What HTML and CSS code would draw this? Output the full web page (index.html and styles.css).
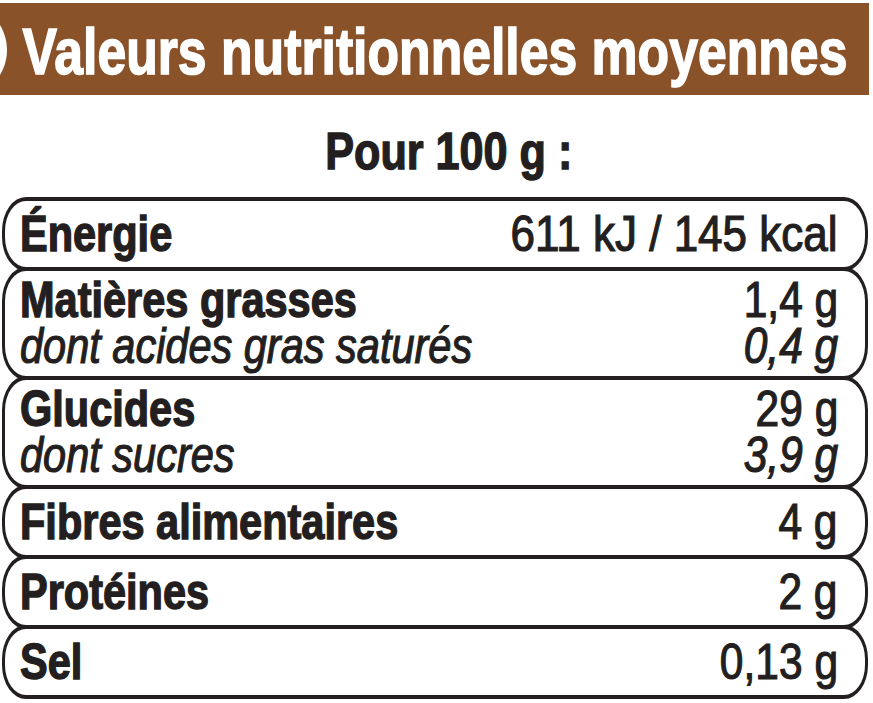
FILE: index.html
```html
<!DOCTYPE html>
<html lang="fr">
<head>
<meta charset="utf-8">
<title>Valeurs nutritionnelles moyennes</title>
<link rel="stylesheet" href="styles.css">
</head>
<body>
<header class="banner">
  <span class="banner-logo"></span>
  <h1 class="banner-title">Valeurs nutritionnelles moyennes</h1>
</header>
<div class="portion"><span class="portion-text">Pour 100 g :</span></div>
<section class="table">
  <div class="row">
    <div class="cell-label"><span class="main">Énergie</span></div>
    <div class="cell-value"><span class="num num-wide">611 kJ / 145 kcal</span></div>
  </div>
  <div class="row row-double">
    <div class="cell-label"><span class="main">Matières grasses</span><span class="sub">dont acides gras saturés</span></div>
    <div class="cell-value"><span class="num">1,4 g</span><span class="num sub">0,4 g</span></div>
  </div>
  <div class="row row-double">
    <div class="cell-label"><span class="main">Glucides</span><span class="sub">dont sucres</span></div>
    <div class="cell-value"><span class="num">29 g</span><span class="num sub">3,9 g</span></div>
  </div>
  <div class="row">
    <div class="cell-label"><span class="main">Fibres alimentaires</span></div>
    <div class="cell-value"><span class="num">4 g</span></div>
  </div>
  <div class="row">
    <div class="cell-label"><span class="main">Protéines</span></div>
    <div class="cell-value"><span class="num">2 g</span></div>
  </div>
  <div class="row">
    <div class="cell-label"><span class="main">Sel</span></div>
    <div class="cell-value"><span class="num">0,13 g</span></div>
  </div>
</section>
</body>
</html>
```
FILE: styles.css
```css
html, body {
  margin: 0;
  padding: 0;
  background: #ffffff;
}
body {
  font-family: "Liberation Sans", Arial, sans-serif;
  color: #231f20;
}
.banner {
  position: relative;
  overflow: hidden;
  margin-top: 3px;
  width: 869px;
  height: 92px;
  background: #8a5229;
  display: flex;
  align-items: center;
}
.banner-logo {
  position: absolute;
  left: -89px;
  top: -1px;
  width: 96px;
  height: 96px;
  border-radius: 50%;
  background: #ffffff;
}
.banner-title {
  margin: 0;
  padding: 5px 0 0 28px;
  font-size: 64px;
  line-height: 64px;
  font-weight: 700;
  color: #ffffff;
  white-space: nowrap;
  -webkit-text-stroke: 1.6px #ffffff;
  transform: scaleX(0.808);
  transform-origin: 0 50%;
}
.portion {
  margin: 26px 0 16px;
  padding-left: 24px;
  display: flex;
  justify-content: center;
}
.portion-text {
  font-size: 52px;
  line-height: 60px;
  font-weight: 700;
  white-space: nowrap;
  -webkit-text-stroke: 1.4px #231f20;
  transform: scaleX(0.83);
}
.table {
  margin-left: 2px;
  width: 866px;
  display: flex;
  flex-direction: column;
}
.row {
  display: flex;
  justify-content: space-between;
  border-style: solid;
  border-color: #231f20;
  border-width: 4px 3px;
  border-radius: 24px / 34px;
  padding: 10px 27px 10px 15px;
  font-size: 50px;
  line-height: 46px;
}
.row + .row {
  margin-top: -4px;
}
.row-double {
  padding-top: 6px;
  padding-bottom: 7px;
}
.cell-label, .cell-value {
  display: flex;
  flex-direction: column;
  white-space: nowrap;
}
.cell-label {
  align-items: flex-start;
}
.cell-value {
  align-items: flex-end;
}
.cell-label span {
  transform: scaleX(0.83);
  transform-origin: 0 50%;
}
.cell-value span {
  transform: scaleX(0.85);
  transform-origin: 100% 50%;
}
.cell-value .num-wide {
  transform: scaleX(0.88);
}
.main {
  font-weight: 700;
  -webkit-text-stroke: 1.4px #231f20;
}
.num, .sub {
  -webkit-text-stroke: 1.2px #231f20;
}
.sub {
  font-style: italic;
}
```
